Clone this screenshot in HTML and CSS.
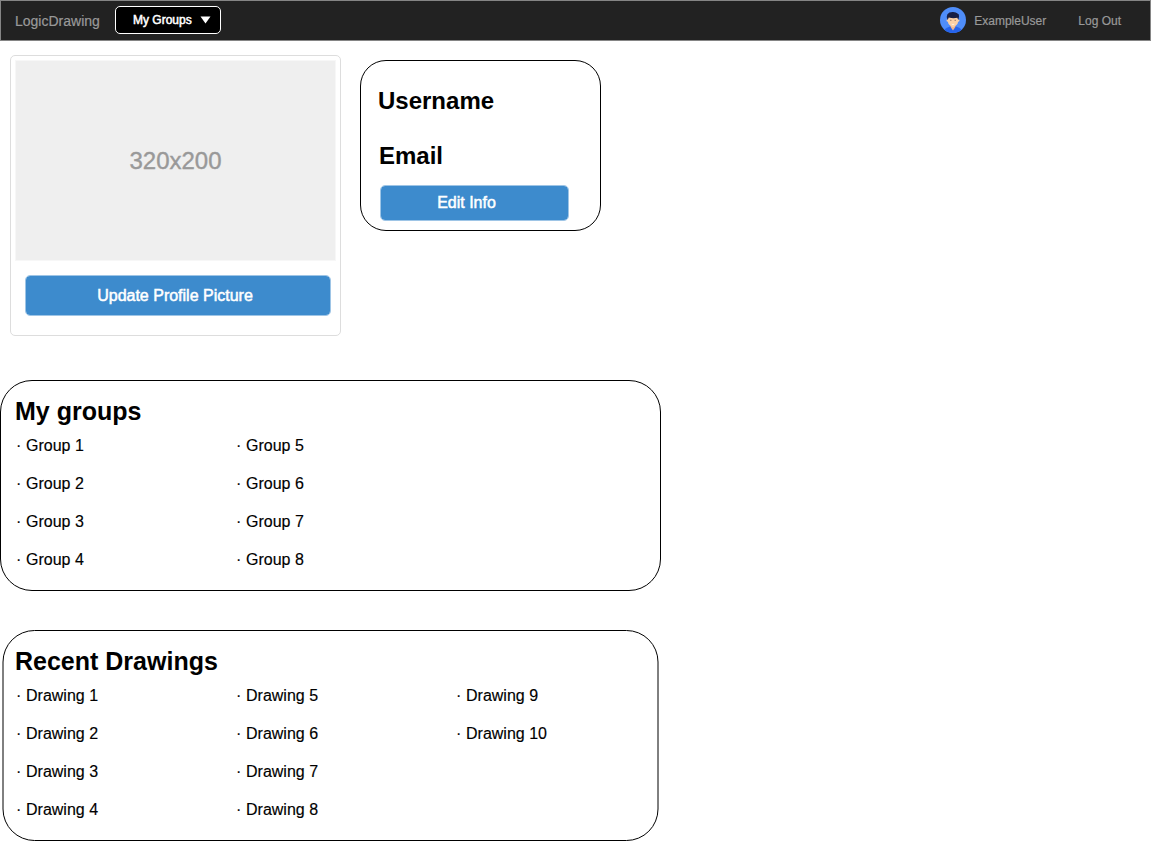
FILE: index.html
```html
<!DOCTYPE html>
<html lang="en">
<head>
<meta charset="utf-8">
<title>LogicDrawing</title>
<link rel="stylesheet" href="styles.css">
</head>
<body>
<header class="navbar">
  <a class="brand">LogicDrawing</a>
  <button class="groups-menu"><span>My Groups</span><svg class="caret" width="11" height="8" viewBox="0 0 11 8"><path d="M0.5 0.5h10l-5 7z" fill="#fff"/></svg></button>
  <svg class="avatar" width="26" height="26" viewBox="0 0 26 26">
    <defs><clipPath id="disc"><circle cx="13" cy="13" r="13"/></clipPath></defs>
    <g clip-path="url(#disc)">
      <rect width="26" height="26" fill="#4f8df9"/>
      <path d="M4 26V23.5Q4.5 21.5 10 19.5H16Q21.5 21.5 22 23.5V26z" fill="#2563eb"/>
      <path d="M10.6 17h4.8v3L13 23.5l-2.4-3.5z" fill="#efb58e"/>
      <circle cx="7.8" cy="13.5" r="1.2" fill="#fbd0a5"/>
      <circle cx="18.2" cy="13.5" r="1.2" fill="#fbd0a5"/>
      <path d="M8 9h10v6q0 3-5 5.2Q8 18 8 15z" fill="#fbd0a5"/>
      <path d="M7.6 13Q6 9.5 7.4 7.2Q9 4.8 13.2 5q3.1.1 4.3 1.5q2 .6 1.5 3.2l-.7 3.3l-1-2.2q-4 1-8.5-.2z" fill="#181f45"/>
      <path d="M10 13.3h1.5M14.5 13.3H16" stroke="#896b60" stroke-width=".8"/>
      <path d="M11.7 17.2q1.3.7 2.6 0" fill="none" stroke="#fff" stroke-width=".7"/>
    </g>
  </svg>
  <span class="nav-item">ExampleUser</span>
  <a class="nav-item logout">Log Out</a>
</header>
<main class="content">
  <section class="profile">
    <div class="picture-card">
      <div class="placeholder">320x200</div>
      <button class="btn btn-picture">Update Profile Picture</button>
    </div>
    <div class="info-card">
      <h2 class="info-name">Username</h2>
      <h2 class="info-email">Email</h2>
      <button class="btn btn-edit">Edit Info</button>
    </div>
  </section>
  <section class="panel panel-groups">
    <h2 class="panel-title">My groups</h2>
    <ul class="items">
      <li>Group 1</li><li>Group 2</li><li>Group 3</li><li>Group 4</li>
      <li>Group 5</li><li>Group 6</li><li>Group 7</li><li>Group 8</li>
    </ul>
  </section>
  <section class="panel panel-drawings">
    <svg class="outline" width="661" height="211"><rect x="3" y=".5" width="655" height="210" rx="31.5" fill="none" stroke="#000"/></svg>
    <h2 class="panel-title">Recent Drawings</h2>
    <ul class="items">
      <li>Drawing 1</li><li>Drawing 2</li><li>Drawing 3</li><li>Drawing 4</li>
      <li>Drawing 5</li><li>Drawing 6</li><li>Drawing 7</li><li>Drawing 8</li>
      <li>Drawing 9</li><li>Drawing 10</li>
    </ul>
  </section>
</main>
</body>
</html>
```
FILE: styles.css
```css
* { box-sizing: border-box; }
body { margin: 0; background: #fff; color: #000; font-family: "Liberation Sans", Arial, sans-serif; }
h2, ul { margin: 0; padding: 0; }
button { font-family: inherit; padding: 0; }

.navbar {
  display: flex;
  align-items: center;
  height: 41px;
  padding: 0 29px 0 14px;
  background: #222;
  border: 1px solid #858585;
  color: #999;
}
.brand { width: 100px; font-size: 14px; line-height: 16px; padding-top: 1px; -webkit-text-stroke: .2px #999; }
.groups-menu {
  display: flex;
  align-items: center;
  gap: 8px;
  width: 106px;
  height: 28px;
  margin-bottom: 1px;
  padding: 0 0 0 17px;
  background: #000;
  border: 1px solid #fff;
  border-radius: 5px;
  color: #fff;
  font-size: 12px;
  -webkit-text-stroke: .5px #fff;
}
.caret { flex: none; }
.avatar { margin: 0 8px 1px auto; }
.nav-item { font-size: 12px; line-height: 14px; padding-top: 1px; -webkit-text-stroke: .2px #999; }
.logout { margin-left: 32px; }

.profile { display: flex; align-items: flex-start; height: 339px; padding: 14px 0 0 10px; }
.picture-card { width: 331px; height: 281px; padding: 5px 4px; border: 1px solid #ddd; border-radius: 5px; }
.placeholder {
  display: flex;
  align-items: center;
  justify-content: center;
  width: 321px;
  height: 201px;
  margin-top: -1px;
  background: #efefef;
  background-clip: padding-box;
  border: 1px solid #f7f7f7;
  color: #999;
  font-size: 24px;
  -webkit-text-stroke: .4px #999;
}
.info-card { width: 241px; height: 171px; margin: 5px 0 0 19px; padding: 26px 0 0 17px; border: 1px solid #000; border-radius: 26px; }
.info-name, .info-email { font-size: 24px; line-height: 28px; }
.info-email { margin: 27px 0 0 1px; }
.btn {
  display: block;
  background: #3d8bcd;
  background-clip: padding-box;
  border: 1px solid #9ec5e6;
  border-radius: 5px;
  color: #fff;
  font-size: 16px;
  -webkit-text-stroke: .5px #fff;
}
.btn-picture { width: 306px; height: 41px; margin: 14px 0 0 10px; padding-right: 6px; }
.btn-edit { width: 189px; height: 36px; margin: 15px 0 0 2px; padding-right: 16px; }

.panel { position: relative; width: 661px; height: 211px; padding: 17px 0 0 15px; }
.panel-groups { border: 1px solid #000; border-radius: 32px; padding: 16px 0 0 14px; }
.panel-drawings { margin-top: 39px; }
.outline { position: absolute; inset: 0; }
.panel-title { font-size: 25px; line-height: 28px; }
.items {
  display: grid;
  grid-template-rows: repeat(4, 38px);
  grid-auto-flow: column;
  grid-auto-columns: 220px;
  margin-top: 2px;
  list-style: none;
}
.items li { font-size: 16px; line-height: 38px; -webkit-text-stroke: .15px #000; }
.items li::before { content: "·"; display: inline-block; width: 10px; padding-left: 1px; }
```
